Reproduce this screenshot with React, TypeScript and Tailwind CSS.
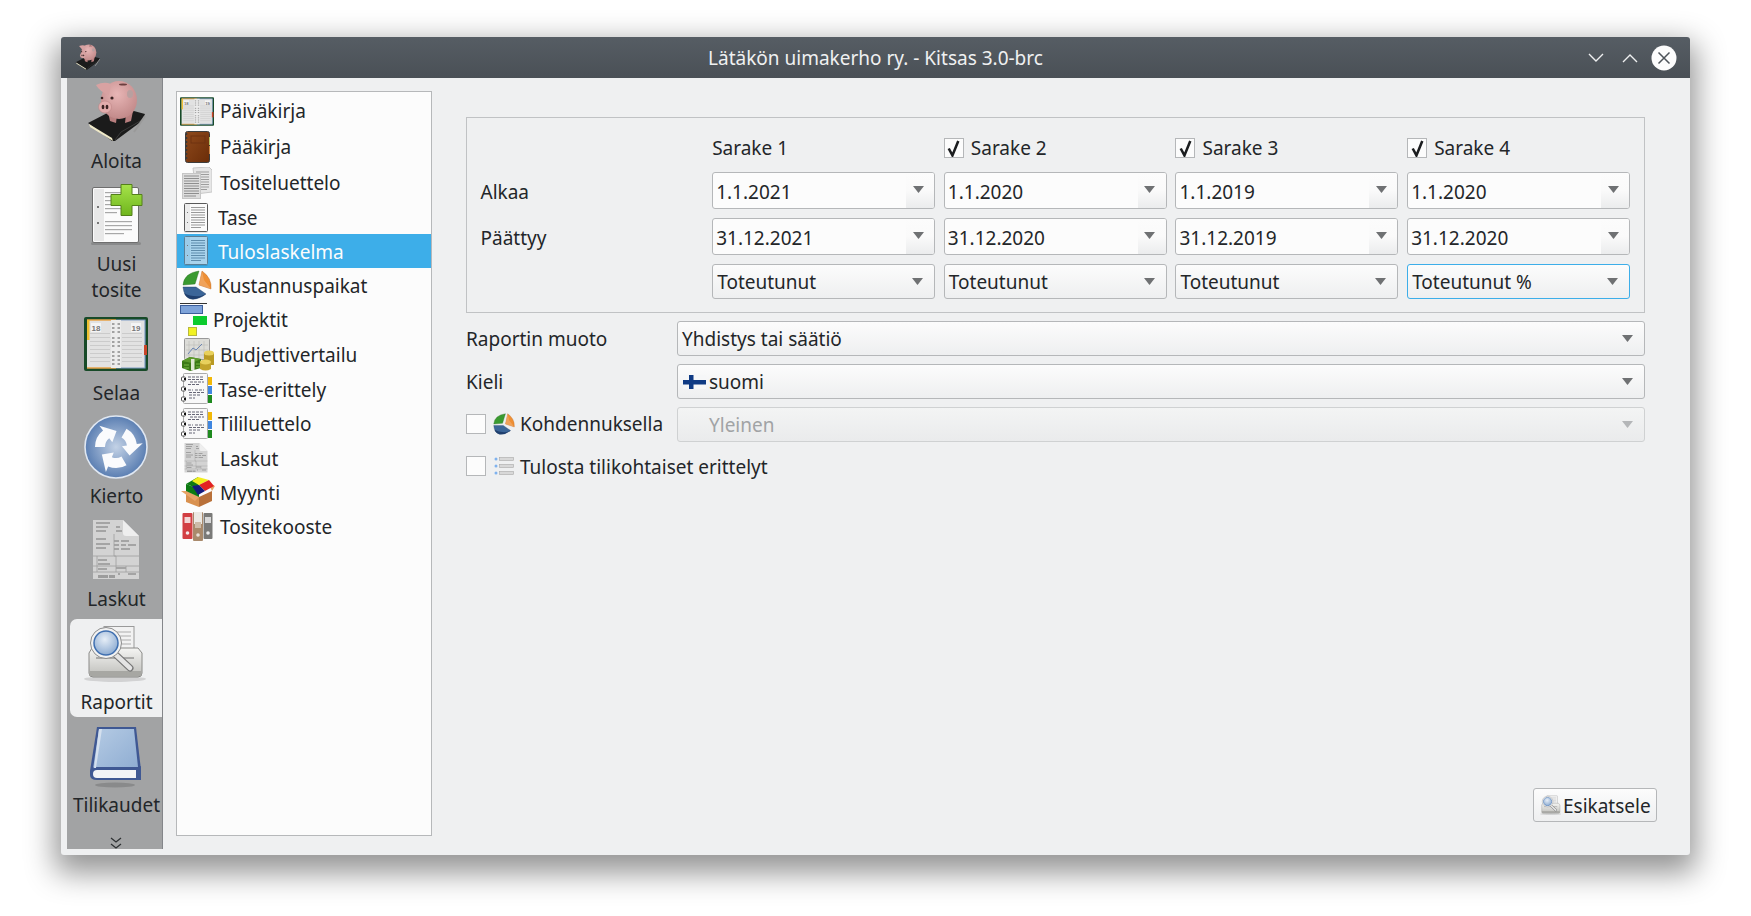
import React from "react";

type S = { w?: number; h?: number; tint?: boolean };

const Defs = () => (
  <svg className="absolute w-0 h-0" aria-hidden="true">
    <defs>
      <radialGradient id="pink" cx="0.45" cy="0.35" r="0.7"><stop offset="0" stopColor="#e8b6b6" /><stop offset="1" stopColor="#bf8686" /></radialGradient>
      <linearGradient id="plus" x1="0" y1="0" x2="0" y2="1"><stop offset="0" stopColor="#a6e34a" /><stop offset="1" stopColor="#6fb51c" /></linearGradient>
      <radialGradient id="cyc" cx="0.5" cy="0.5" r="0.55"><stop offset="0" stopColor="#c3d2e6" /><stop offset="1" stopColor="#5076ad" /></radialGradient>
      <linearGradient id="bookb" x1="0" y1="0" x2="1" y2="1"><stop offset="0" stopColor="#b5cbe4" /><stop offset="1" stopColor="#8fadd2" /></linearGradient>
      <linearGradient id="print" x1="0" y1="0" x2="0" y2="1"><stop offset="0" stopColor="#f5f5f3" /><stop offset="1" stopColor="#bdbdb9" /></linearGradient>
      <radialGradient id="lens" cx="0.45" cy="0.35" r="0.7"><stop offset="0" stopColor="#e6eef7" /><stop offset="1" stopColor="#87a7cf" /></radialGradient>
      <linearGradient id="brown" x1="0" y1="0" x2="1" y2="1"><stop offset="0" stopColor="#8f4a1c" /><stop offset="1" stopColor="#6a2c08" /></linearGradient>
    </defs>
  </svg>
);

const Pig = ({ w = 64, h = 64 }: S) => (
  <svg width={w} height={h} viewBox="0 0 64 64">
    <path d="M4 43 L35 27 L61 34 L58 41 L31 61 L28 61 Z" fill="#1b1b1b" />
    <path d="M5 44 L28 58 L29 61 L6 47 Z" fill="#efe9c8" />
    <path d="M31 60 L37 52 L58 40" stroke="#3a3a3a" strokeWidth="1" fill="none" />
    <path d="M50 52 L61 36" stroke="#9a9a9a" strokeWidth="2" fill="none" />
    <path d="M24 32 L26 41 L32 43 L33 35 Z M42 34 L41 43 L47 41 L49 31 Z" fill="#b97f7f" />
    <ellipse cx="35" cy="20" rx="18" ry="19" fill="url(#pink)" />
    <path d="M12 5 Q20 1 27 4 L25 15 Q16 12 12 5 Z" fill="#d8a2a2" />
    <ellipse cx="21" cy="27" rx="6.5" ry="6" fill="#e2acac" stroke="#b98080" strokeWidth="0.5" />
    <ellipse cx="19" cy="27" rx="1.4" ry="2.2" fill="#3a2222" />
    <ellipse cx="23" cy="27" rx="1.4" ry="2.2" fill="#3a2222" />
    <circle cx="28" cy="18" r="1.6" fill="#3a2222" />
    <circle cx="18" cy="18" r="1.3" fill="#3a2222" />
    <ellipse cx="39" cy="4.5" rx="4" ry="1" fill="#6b3f3f" />
    <ellipse cx="46" cy="14" rx="3" ry="4" fill="#b8a0a0" />
  </svg>
);

const NewDoc = () => (
  <svg width={64} height={64} viewBox="0 0 64 64">
    <rect x="7" y="59" width="50" height="3" fill="#000" opacity="0.15" rx="1.5" />
    <rect x="8.5" y="4.5" width="46" height="55" rx="1.5" fill="#fbfbfb" stroke="#6e6e6e" />
    <rect x="10" y="6" width="10" height="52" fill="#e8e8e8" />
    <rect x="13" y="23" width="2" height="2" fill="#777" />
    <rect x="13" y="39" width="2" height="2" fill="#777" />
    {[9, 13, 17, 21, 25, 29].map((y) => <rect key={y} x="21" y={y} width={y === 29 ? 12 : 18} height="1.2" fill="#a8a8a8" />)}
    {[38, 42, 46, 50].map((y) => <rect key={y} x="21" y={y} width={y === 50 ? 19 : 27} height="1.2" fill="#a8a8a8" />)}
    <path d="M37 1.5 h11 v10 h10 v11 h-10 v10 h-11 v-10 h-10 v-11 h10 z" fill="url(#plus)" stroke="#54801a" strokeLinejoin="round" />
  </svg>
);

const Diary = ({ w = 64, h = 54 }: S) => (
  <svg width={w} height={h} viewBox="0 0 64 54">
    <rect x="0" y="0" width="64" height="54" rx="2" fill="#174a28" />
    <rect x="3" y="3" width="58" height="48" fill="#e2e2e2" />
    <path d="M3 3 H32 M3 51 H32" stroke="#e8a44a" strokeWidth="1.5" />
    <path d="M32 3 H61 V51 H32" stroke="#7e9cc6" strokeWidth="1.2" fill="none" />
    <rect x="3" y="3" width="2.5" height="20" fill="#f0c030" />
    <rect x="60" y="28" width="3" height="10" fill="#c8452a" />
    {[16, 20, 24, 28, 32, 36, 40, 44].map((y) => (
      <g key={y}>
        <rect x="6" y={y} width="20" height="1" fill="#cbcbcb" />
        <rect x="38" y={y} width="20" height="1" fill="#cbcbcb" />
      </g>
    ))}
    <rect x="27" y="3" width="10" height="48" fill="#ececec" />
    {[6, 10, 14, 20, 24, 28, 34, 38, 42, 46].map((y) => (
      <g key={y}>
        <rect x="28" y={y} width="2.5" height="2" fill="#a2a2a2" />
        <rect x="33.5" y={y} width="2.5" height="2" fill="#a2a2a2" />
      </g>
    ))}
    <rect x="7" y="6" width="10" height="9" fill="#f4f4f4" />
    <rect x="47" y="6" width="10" height="9" fill="#f4f4f4" />
    <text x="12" y="14" fontSize="8" textAnchor="middle" fill="#777" fontWeight="700" fontFamily="'Liberation Sans', sans-serif">18</text>
    <text x="52" y="14" fontSize="8" textAnchor="middle" fill="#777" fontWeight="700" fontFamily="'Liberation Sans', sans-serif">19</text>
  </svg>
);

const polar = (r: number, a: number) => {
  const t = (a * Math.PI) / 180;
  return `${(32 + r * Math.cos(t)).toFixed(2)} ${(32 + r * Math.sin(t)).toFixed(2)}`;
};
const arrowPath = (a: number) =>
  `M${polar(11, a)} A11 11 0 0 1 ${polar(11, a + 52)} L${polar(6, a + 52)} L${polar(16, a + 92)} L${polar(27, a + 52)} L${polar(21, a + 52)} A21 21 0 0 0 ${polar(21, a)} Z`;

const Cycle = () => (
  <svg width={64} height={64} viewBox="0 0 64 64">
    <circle cx="32" cy="32" r="31" fill="url(#cyc)" stroke="#dfe7f2" strokeWidth="1.6" />
    {[-60, 60, 180].map((a) => <path key={a} d={arrowPath(a)} fill="#fafbfd" />)}
  </svg>
);

const Invoice = ({ w = 64, h = 64 }: S) => (
  <svg width={w} height={h} viewBox="0 0 64 64">
    <path d="M9 2 H39 L55 18 V61 H9 Z" fill="#d3d3d3" />
    <path d="M39 2 L55 18 H42 Q39 18 39 15 Z" fill="#eeeeee" />
    <path d="M12 5 h14 M12 9 h12 M12 13 h10 M32 9 h4 M32 13 h6 M12 21 h10 M12 26 h14 M12 30 h10 M30 23 h5 M37 23 h8 M30 27 h5 M37 27 h5 M44 27 h8 M30 31 h5 M37 31 h9 M14 42 h9 M14 46 h12 M14 51 h9 M32 50 h10 M34 56 h2 M44 56 h8" stroke="#777" strokeWidth="1.1" />
    <path d="M9 38 H55 M9 48 H55 M9 54 H55 M13 38 V54 M30 16 V38 M32 38 V54 M42 48 V54 M30 38 H32" stroke="#9e9e9e" strokeWidth="0.8" fill="none" />
    <path d="M15 57 v3 M17 57 v3 M19 57 v3 M21 57 v3 M23 57 v3 M26 57 v3 M28 57 v3 M30 57 v3" stroke="#666" strokeWidth="1" />
  </svg>
);

const Preview = ({ w = 64, h = 64 }: S) => (
  <svg width={w} height={h} viewBox="0 0 64 64">
    <ellipse cx="31" cy="58" rx="31" ry="3" fill="#000" opacity="0.12" />
    <rect x="20" y="5.5" width="30" height="27" fill="#f2f2f2" stroke="#9a9a9a" />
    <path d="M30 11 h17 M30 15 h17 M34 19 h13 M36 23 h11" stroke="#c4c4c4" strokeWidth="1.4" />
    <path d="M8 27 L5 32 V52 Q5 56 9 56 H54 Q58 56 58 52 V32 L54 27 Z" fill="url(#print)" stroke="#8a8a88" />
    <rect x="5.5" y="50" width="52" height="5" fill="#a7a7a3" />
    <rect x="12" y="36" width="38" height="2" fill="#666" opacity="0.45" />
    <path d="M31 33 L46 47" stroke="#777" strokeWidth="7" strokeLinecap="round" />
    <path d="M31 33 L46 47" stroke="#e4e4e4" strokeWidth="4.5" strokeLinecap="round" />
    <circle cx="22" cy="22" r="15.5" fill="#f2f2f2" stroke="#8d8d8d" />
    <circle cx="22" cy="22" r="12" fill="url(#lens)" stroke="#3f6fb0" strokeWidth="1.5" />
  </svg>
);

const Book = () => (
  <svg width={64} height={64} viewBox="0 0 64 64">
    <ellipse cx="31" cy="61" rx="20" ry="2.5" fill="#000" opacity="0.15" />
    <path d="M13 3 H52 L57 46 V56 H13 Q6 56 6 51 V47 Z" fill="#3f5893" />
    <path d="M15 5 H50 L54 43 H10 Q9 44 9 45 Z" fill="url(#bookb)" />
    <path d="M15 5 H18 L12 44 H10 Z" fill="#d4e0ee" />
    <path d="M13 46 H52 V54 H13 Q9 54 9 50 Q9 46 13 46 Z" fill="#f2f3f6" />
    <path d="M52 44 L57 42 V56 H52 Z" fill="#3f5893" />
  </svg>
);

const BrownBook = () => (
  <svg width={25} height={32} viewBox="0 0 25 32">
    <rect x="0.5" y="0.5" width="24" height="31" rx="2" fill="url(#brown)" stroke="#3d3d3d" />
    <path d="M1.5 2 V30" stroke="#3a3a3a" strokeWidth="1.5" strokeDasharray="2 2" />
    <rect x="6" y="5" width="14" height="7" fill="none" stroke="#6e3210" />
    <rect x="24" y="6" width="1" height="8" fill="#b7c26a" />
    <rect x="24" y="15" width="1" height="8" fill="#c9864a" />
  </svg>
);

const Docs = () => (
  <svg width={30} height={32} viewBox="0 0 30 32">
    <path d="M11 1 L27 0 L30 3 V25 L14 27 Z" fill="#e6e6e6" stroke="#c8c8c8" />
    <path d="M14 5 h13 M14 7.5 h13 M14 10 h13 M15 12.5 h12 M15 15 h12 M15 17.5 h12 M15 20 h12 M15 22.5 h10" stroke="#9d9d9d" strokeWidth="1" />
    <rect x="0.5" y="6.5" width="18" height="25" fill="#dddddd" stroke="#c6c6c6" />
    <path d="M2 9 h15 M2 11.5 h15 M2 14 h15 M2 16.5 h15 M2 19 h15 M2 21.5 h15 M2 24 h15 M2 26.5 h15 M2 29 h12" stroke="#8e8e8e" strokeWidth="1" />
  </svg>
);

const Page = ({ tint }: S) => (
  <svg width={24} height={30} viewBox="0 0 24 30">
    <rect x="0.5" y="28" width="23" height="2" fill="#000" opacity="0.1" />
    <rect x="0.5" y="0.5" width="23" height="28" rx="1" fill={tint ? "#a9d3ec" : "#fbfbfb"} stroke={tint ? "#5a7f96" : "#5a5a5a"} />
    <rect x="1" y="1" width="5" height="27" fill={tint ? "#9bcbe8" : "#ececec"} />
    {[4, 6.5, 9, 11.5, 14, 16.5, 19, 21.5, 24].map((y) => <rect key={y} x="7" y={y} width={y === 24 ? 10 : 14} height="1" fill={tint ? "#5f8cab" : "#9a9a9a"} />)}
    <rect x="3" y="9" width="1" height="1" fill="#777" />
    <rect x="3" y="19" width="1" height="1" fill="#777" />
  </svg>
);

const PieIcon = ({ w = 30, h = 30 }: S) => (
  <svg width={w} height={h} viewBox="0 0 30 30">
    <path d="M1 15 Q2 3 17 1 L13 14 Z" fill="#3a9a30" stroke="#23691f" strokeWidth="0.4" />
    <path d="M20 1 Q30 8 29 19 L17 15 Z" fill="#ee8f34" stroke="#b55e14" strokeWidth="0.4" />
    <path d="M20 1 L22 10 L29 19 L17 15 Z" fill="#f3b27a" opacity="0.55" />
    <path d="M1 17 H14 L24 24 Q16 30 9 29 Q2 27 1 17 Z" fill="#3b6598" stroke="#1e3a60" strokeWidth="0.4" />
    <path d="M2 23 Q9 27 19 26 L24 24 Q16 30 9 29 Q4 28 2 23 Z" fill="#1f3f6e" />
  </svg>
);

const Gantt = () => (
  <svg width={28} height={33} viewBox="0 0 28 33">
    <path d="M0 0.5 H27" stroke="#333" />
    <rect x="0.5" y="2.5" width="22" height="8" fill="#7ea3d9" stroke="#3b5d9a" />
    <rect x="13" y="13" width="14" height="9" fill="#0ccb2d" />
    <rect x="8.5" y="24.5" width="8" height="8" fill="#f2f222" stroke="#b8b83e" />
  </svg>
);

const Budget = () => (
  <svg width={34} height={33} viewBox="0 0 34 33">
    <rect x="3.5" y="0.5" width="25" height="21" rx="1" fill="#dcdcd8" stroke="#999" />
    <path d="M8 3 V20 M13 3 V20 M18 3 V20 M23 3 V20 M5 7 H27 M5 12 H27 M5 17 H27" stroke="#c0c0bc" strokeWidth="0.7" />
    <path d="M7 16 L12 10 L15 12 L21 6" stroke="#6a84b2" strokeWidth="1" fill="none" />
    <path d="M1 23 L9 19 L20 21 L20 30 L9 33 L1 30 Z" fill="#3b7a16" />
    <path d="M1 23 L9 19 L20 21 L11 25 Z" fill="#5c9a2c" />
    <rect x="10" y="21" width="3.5" height="11" fill="#dfe8d2" />
    <path d="M3 27 h5 M15 26 h4 M3 30 h5 M15 29 h4" stroke="#78b944" />
    <path d="M23 15 V27 H33 V15 Z" fill="#b99a24" />
    <ellipse cx="28" cy="15" rx="5" ry="2.5" fill="#e8d05c" />
    <path d="M19 24 V31 Q24.5 34 30 31 V24 Z" fill="#c3a42c" />
    <ellipse cx="24.5" cy="24" rx="5.5" ry="2.4" fill="#e8d05c" />
  </svg>
);

const Ledger = () => (
  <svg width={31} height={32} viewBox="0 0 31 32">
    <rect x="2.5" y="0.5" width="24" height="30" rx="1" fill="#f8f8f8" stroke="#aaa" />
    {[4, 14, 24].map((y) => (
      <g key={y}>
        <rect x="0.5" y={y} width="4" height="4" rx="1" fill="#fff" stroke="#555" />
        <rect x="3" y={y + 1} width="2" height="2" fill="#111" />
      </g>
    ))}
    <path d="M7 4 h16 M7 6.5 h16 M9 9 h14 M7 11.5 h12 M7 17 h5 M14 17 h9 M8 19.5 h15 M8 22 h12 M8 25 h6" stroke="#556" strokeWidth="0.9" strokeDasharray="3 1" />
    <rect x="27" y="4" width="4" height="8" fill="#f2b807" />
    <rect x="27" y="13" width="4" height="8" fill="#3f86e0" />
    <rect x="27" y="22" width="4" height="8" fill="#1e8a1e" />
  </svg>
);

const BoxIcon = () => (
  <svg width={34} height={30} viewBox="0 0 34 30">
    <path d="M5 14 L18 20 L18 30 L5 25 Z" fill="#d9914f" />
    <path d="M18 20 L31 14 L31 24 L18 30 Z" fill="#b9713a" />
    <path d="M0 14 L5 14 L18 20 L14 24 Z M31 14 L34 9 L27 6 Z" fill="#e8a468" />
    <path d="M5 14 L18 20 L18 12 L5 7 Z" fill="#0d7a12" />
    <path d="M5 7 L17 0 L18 12 Z" fill="#0d7a12" />
    <path d="M17 0 L28 3 L18 8 L11 4 Z" fill="#f2ee1f" />
    <path d="M18 8 L28 3 L33 9 L24 14 Z" fill="#e22222" />
    <path d="M11 9 L18 8 L24 14 L17 18 Z" fill="#141a7c" />
  </svg>
);

const Binders = () => (
  <svg width={31} height={29} viewBox="0 0 31 29">
    <rect x="0.5" y="1" width="10" height="26" rx="1" fill="#d23f43" />
    <rect x="2.5" y="5" width="6" height="6" fill="#f2d6d6" />
    <circle cx="5.5" cy="21" r="1.8" fill="#f3eaea" />
    <rect x="11" y="0" width="10" height="29" rx="1" fill="#a98a6c" />
    <rect x="12" y="0" width="8" height="12" fill="#ece9e4" />
    <rect x="13" y="10" width="6" height="6" fill="#cdbba8" />
    <circle cx="16" cy="23" r="1.8" fill="#e8e0d8" />
    <rect x="21.5" y="1" width="9" height="26" rx="1" fill="#7a7a78" />
    <rect x="23" y="5" width="6" height="6" fill="#d8d8d8" />
    <circle cx="26" cy="21" r="1.8" fill="#ececec" />
  </svg>
);

const ListIcon = () => (
  <svg width={20} height={20} viewBox="0 0 20 20">
    <circle cx="2" cy="3" r="1.5" fill="#7fb2ee" />
    <circle cx="2" cy="10" r="1.5" fill="#7fb2ee" />
    <circle cx="2" cy="17" r="1.5" fill="#7fb2ee" />
    <rect x="5.5" y="1.5" width="14" height="3" fill="#d8d8d8" stroke="#a8a8a8" strokeWidth="0.6" />
    <rect x="5.5" y="8.5" width="14" height="3" fill="#d8d8d8" stroke="#a8a8a8" strokeWidth="0.6" />
    <rect x="5.5" y="15.5" width="14" height="3" fill="#d8d8d8" stroke="#a8a8a8" strokeWidth="0.6" />
  </svg>
);

const Flag = () => (
  <svg width={23} height={14} viewBox="0 0 23 14">
    <rect width="23" height="14" fill="#f6f7f8" />
    <rect x="6" width="4.5" height="14" fill="#0f3a84" />
    <rect y="5" width="23" height="4.5" fill="#0f3a84" />
  </svg>
);

const Arrow = ({ muted }: { muted?: boolean }) => (
  <svg width={11} height={7} viewBox="0 0 11 7"><path d="M0 0 H11 L5.5 7 Z" fill={muted ? "#b4b6b8" : "#6f7173"} /></svg>
);

const sideItems = [
  { label: "Aloita", icon: <Pig />, h: "h-[98px]" },
  { label: "Uusi tosite", icon: <NewDoc />, h: "h-[124px]" },
  { label: "Selaa", icon: <div className="pt-[5px]"><Diary /></div>, h: "h-[98px]" },
  { label: "Kierto", icon: <Cycle />, h: "h-[98px]" },
  { label: "Laskut", icon: <Invoice />, h: "h-[98px]" },
  { label: "Raportit", icon: <Preview />, h: "h-[98px]", active: true },
  { label: "Tilikaudet", icon: <Book />, h: "h-[98px]" },
];

const listItems = [
  { label: "Päiväkirja", icon: <Diary w={34} h={29} />, row: "h-[36px]", slot: "w-[43px] pl-[3px]" },
  { label: "Pääkirja", icon: <BrownBook />, row: "h-[36px]", slot: "w-[43px] pl-[8px]" },
  { label: "Tositeluettelo", icon: <Docs />, row: "h-[36px]", slot: "w-[43px] pl-[5px]" },
  { label: "Tase", icon: <Page />, row: "h-[33px]", slot: "w-[41px] pl-[7px]", text: "pt-[2px]" },
  { label: "Tuloslaskelma", icon: <Page tint />, row: "h-[34px] bg-[#3daee9] text-[#fcfcfc]", slot: "w-[41px] pl-[7px]", text: "pt-[2px]" },
  { label: "Kustannuspaikat", icon: <PieIcon />, row: "h-[34px]", slot: "w-[41px] pl-[5px]", text: "pt-[3px]" },
  { label: "Projektit", icon: <Gantt />, row: "h-[35px]", slot: "w-[36px] pl-[3px]", text: "pt-[2px]" },
  { label: "Budjettivertailu", icon: <Budget />, row: "h-[35px]", slot: "w-[43px] pl-[4px]", text: "pt-[2px]" },
  { label: "Tase-erittely", icon: <Ledger />, row: "h-[34px]", slot: "w-[41px] pl-[4px]", text: "pt-[3px]" },
  { label: "Tililuettelo", icon: <Ledger />, row: "h-[35px]", slot: "w-[41px] pl-[4px]", text: "pt-[2px]" },
  { label: "Laskut", icon: <Invoice w={32} h={32} />, row: "h-[34px]", slot: "w-[43px] pl-[3px]", text: "pt-[2px]" },
  { label: "Myynti", icon: <BoxIcon />, row: "h-[34px]", slot: "w-[43px] pl-[4px]", text: "pt-[2px]" },
  { label: "Tositekooste", icon: <Binders />, row: "h-[34px]", slot: "w-[43px] pl-[5px]", text: "pt-[3px]" },
];

const DateField = ({ value }: { value: string }) => (
  <div className="flex items-stretch h-[37px] border border-[#b5b7b9] rounded-[3px] bg-[#fcfcfc] overflow-hidden">
    <div className="flex-1 flex items-center pl-[3px] pt-[4px]">{value}</div>
    <div className="w-[28px] flex items-center justify-center pb-[2px] pr-[4px] bg-gradient-to-b from-[#fcfcfc] via-[#fafafa] to-[#ebeced]"><Arrow /></div>
  </div>
);

const Combo = ({ children, focus, disabled, pad = "pr-[11px]" }: { children: React.ReactNode; focus?: boolean; disabled?: boolean; pad?: string }) => (
  <div className={`flex items-center justify-between h-[35px] pl-[4px] ${pad} border rounded-[3px] bg-gradient-to-b ${focus ? "border-[#3daee9]" : disabled ? "border-[#cfd1d2]" : "border-[#b5b7b9]"} ${disabled ? "from-[#f3f4f4] to-[#eaebec] text-[#a1a3a5]" : "from-[#fcfcfc] to-[#eeeff0]"}`}>
    <div className="flex items-center pt-[1px]">{children}</div>
    <Arrow muted={disabled} />
  </div>
);

const Check = ({ checked }: { checked?: boolean }) => (
  <span className="w-[20px] h-[20px] flex items-center justify-center border border-[#b5b7b9] bg-[#fcfcfc] shrink-0">
    {checked && (
      <svg width={15} height={17} viewBox="0 0 14 16"><path d="M2.5 8 L6 14.5 L11.5 1" stroke="#1b1d1f" strokeWidth="2.4" fill="none" /></svg>
    )}
  </span>
);

const columns = [
  { s: "1.1.2021", e: "31.12.2021", t: "Toteutunut" },
  { s: "1.1.2020", e: "31.12.2020", t: "Toteutunut" },
  { s: "1.1.2019", e: "31.12.2019", t: "Toteutunut" },
  { s: "1.1.2020", e: "31.12.2020", t: "Toteutunut %", focus: true },
];

export default function App() {
  return (
    <div className="min-h-[916px] bg-white pt-[37px] pl-[61px] overflow-hidden text-[19px] text-[#232629] font-['Noto_Sans',sans-serif]">
      <Defs />
      <div className="w-[1629px] h-[818px] flex flex-col bg-[#eff0f1] rounded-[3px] overflow-hidden shadow-[0_12px_30px_6px_rgba(0,0,0,0.42)]">
        <div className="h-[41px] shrink-0 flex items-center justify-between pl-[13px] pr-[13px] bg-gradient-to-b from-[#565d64] to-[#4a5056] text-[#eff0f1]">
          <Pig w={27} h={27} />
          <span className="flex-1 text-center pl-[64px] pt-[2px]">Lätäkön uimakerho ry. - Kitsas 3.0-brc</span>
          <div className="flex items-center">
            <span className="flex mr-[14px]"><svg width={20} height={20} viewBox="0 0 20 20"><path d="M3 6 L10 13 L17 6" stroke="#eff0f1" strokeWidth="1.4" fill="none" /></svg></span>
            <span className="flex mr-[11px]"><svg width={20} height={20} viewBox="0 0 20 20"><path d="M3 14 L10 7 L17 14" stroke="#eff0f1" strokeWidth="1.4" fill="none" /></svg></span>
            <svg width={26} height={26} viewBox="0 0 26 26"><circle cx="13" cy="13" r="12.5" fill="#fcfcfc" /><path d="M7.5 7.5 L18.5 18.5 M18.5 7.5 L7.5 18.5" stroke="#4d5359" strokeWidth="1.5" /></svg>
          </div>
        </div>
        <div className="flex-1 flex min-h-0">
          <div className="ml-[6px] mb-[6px] w-[96px] flex flex-col items-end bg-[#a2a3a4] border-r border-[#84868a] overflow-hidden">
            {sideItems.map((it) => (
              <div key={it.label} className={`${it.h} mb-[5px] w-[93px] -mr-px flex flex-col items-center text-center leading-[26px] shrink-0 rounded-l-[7px] ${it.active ? "bg-[#eff0f1]" : ""}`}>
                <div className="h-[70px] pt-[2px] pr-[1px] shrink-0">{it.icon}</div>
                <div className="w-min">{it.label}</div>
              </div>
            ))}
            <div className="w-full flex-1 flex items-end justify-center pl-[2px]">
              <svg width={12} height={12} viewBox="0 0 12 12"><path d="M1 1 L6 5 L11 1 M1 7 L6 11 L11 7" stroke="#2e3133" strokeWidth="1.3" fill="none" /></svg>
            </div>
          </div>
          <div className="ml-[13px] mt-[13px] w-[256px] h-[745px] shrink-0 border border-[#b6b8ba] bg-[#fcfcfc] pt-[1px]">
            {listItems.map((it) => (
              <div key={it.label} className={`flex items-center ${it.row}`}>
                <div className={`${it.slot} shrink-0 flex items-center`}>{it.icon}</div>
                <span className={`leading-none ${it.text ?? ""}`}>{it.label}</span>
              </div>
            ))}
          </div>
          <div className="flex-1 pl-[34px] pr-[45px] pt-[39px] flex flex-col relative">
            <div className="h-[196px] border border-[#c0c2c4] pl-[13.5px] pt-[15px]">
              <div className="grid grid-cols-[223px_223px_223px_223px_223px] grid-rows-[30px_37px_37px_35px] gap-x-[8.67px] gap-y-[9px] items-center">
                <div />
                {[1, 2, 3, 4].map((n) => (
                  <div key={n} className="flex items-center gap-[7px]">
                    {n > 1 && <Check checked />}
                    <span>{`Sarake ${n}`}</span>
                  </div>
                ))}
                <div className="pt-[3px]">Alkaa</div>
                {columns.map((c, i) => <DateField key={i} value={c.s} />)}
                <div className="pt-[4px]">Päättyy</div>
                {columns.map((c, i) => <DateField key={i} value={c.e} />)}
                <div />
                {columns.map((c, i) => <Combo key={i} focus={c.focus}>{c.t}</Combo>)}
              </div>
            </div>
            <div className="mt-[8px] flex flex-col gap-[8px]">
              <div className="flex items-center h-[35px]">
                <div className="w-[211px] shrink-0 pt-[1px]">Raportin muoto</div>
                <div className="flex-1"><Combo pad="pr-[11px]">Yhdistys tai säätiö</Combo></div>
              </div>
              <div className="flex items-center h-[35px]">
                <div className="w-[211px] shrink-0 pt-[1px]">Kieli</div>
                <div className="flex-1"><Combo pad="pr-[11px]"><span className="mr-[3px] ml-[1px] -mt-[1px] flex"><Flag /></span>suomi</Combo></div>
              </div>
              <div className="flex items-center h-[35px]">
                <div className="w-[211px] shrink-0 flex items-center -mt-[2px]">
                  <Check />
                  <span className="ml-[7px] mr-[5px] flex"><PieIcon w={22} h={22} /></span>
                  <span className="pt-[2px]">Kohdennuksella</span>
                </div>
                <div className="flex-1"><Combo disabled pad="pr-[11px]"><span className="pl-[27px]">Yleinen</span></Combo></div>
              </div>
              <div className="flex items-center h-[35px] -mt-[2px]">
                <Check />
                <span className="ml-[8px] mr-[6px] flex"><ListIcon /></span>
                <span className="pt-[3px]">Tulosta tilikohtaiset erittelyt</span>
              </div>
            </div>
            <div className="mt-auto mb-[33px] -mr-[12px] self-end">
              <button className="h-[34px] w-[124px] flex items-center pl-[6px] border border-[#b5b7b9] rounded-[3px] bg-gradient-to-b from-[#fcfcfc] to-[#eeeff0]">
                <span className="flex mr-[1px]"><Preview w={22} h={22} /></span><span className="pt-[2px]">Esikatsele</span>
              </button>
            </div>
          </div>
        </div>
      </div>
    </div>
  );
}
